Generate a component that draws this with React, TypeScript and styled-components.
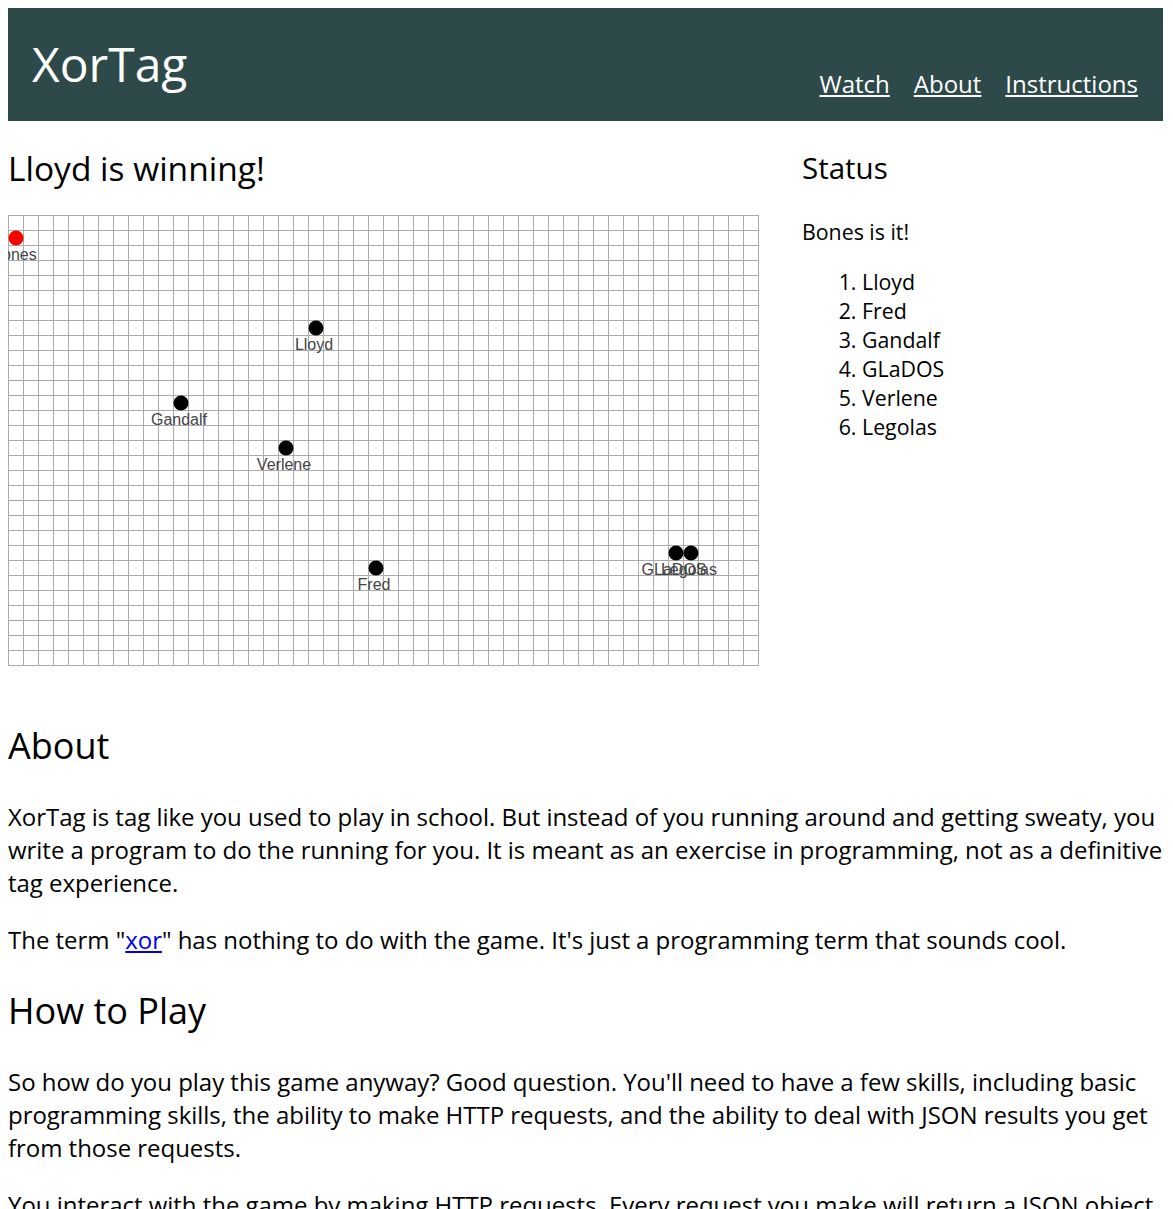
import styled, { createGlobalStyle } from 'styled-components';

const GlobalStyle = createGlobalStyle`
  body {
    margin: 8px 10px 8px 8px;
    font-family: "Open Sans", "Noto Sans", sans-serif;
    color: #000;
    background: #fff;
  }
`;

const Header = styled.header`
  display: flex;
  justify-content: space-between;
  align-items: flex-end;
  padding: 23px 25px 21px 24px;
  background: #2e4949;
  color: #fff;
`;

const Brand = styled.h1`
  margin: 0 0 4px;
  font-size: 48px;
  font-weight: 400;
  line-height: 65px;
`;

const Nav = styled.nav`
  display: flex;
  gap: 24px;
  font-size: 24px;
  line-height: 33px;
`;

const NavLink = styled.a`
  color: #fff;
  text-decoration: underline;
`;

const TopRow = styled.div`
  display: grid;
  grid-template-columns: 770px 1fr;
  column-gap: 24px;
  padding-bottom: 25px;
`;

const Winner = styled.h1`
  margin: 25px 0 25px;
  font-size: 33.5px;
  font-weight: 400;
  line-height: 44px;
`;

const StatusTitle = styled.h2`
  margin: 26px 0 29px;
  font-size: 29.5px;
  font-weight: 400;
  line-height: 41px;
`;

const StatusText = styled.p`
  margin: 0 0 21px;
  font-size: 21.33px;
  line-height: 29px;
`;

const Ranking = styled.ol`
  margin: 0;
  padding-left: 60px;
  font-size: 21.33px;
  line-height: 29px;
`;

const Section = styled.section`
  font-size: 24px;
  line-height: 33px;
  letter-spacing: -0.03px;
`;

const SectionTitle = styled.h2`
  margin: 30px 0;
  font-size: 36px;
  font-weight: 400;
  line-height: 49px;
  letter-spacing: 0;
`;

const Para = styled.p`
  margin: 24px 0;
`;

const TextLink = styled.a`
  color: #0000ee;
  text-decoration: underline;
`;

const BoardSvg = styled.svg`
  display: block;
  overflow: hidden;
`;

const CELL = 15;
const COLS = 50;
const ROWS = 30;

interface Player {
  name: string;
  col: number;
  row: number;
  it?: boolean;
}

const players: Player[] = [
  { name: 'Bones', col: 0, row: 1, it: true },
  { name: 'Lloyd', col: 20, row: 7 },
  { name: 'Gandalf', col: 11, row: 12 },
  { name: 'Verlene', col: 18, row: 15 },
  { name: 'Fred', col: 24, row: 23 },
  { name: 'GLaDOS', col: 44, row: 22 },
  { name: 'Legolas', col: 45, row: 22 },
];

function Board() {
  const w = COLS * CELL;
  const h = ROWS * CELL;
  const lines = [];
  for (let c = 0; c <= COLS; c++) {
    lines.push(<line key={'v' + c} x1={c * CELL + 0.5} y1={0} x2={c * CELL + 0.5} y2={h + 1} />);
  }
  for (let r = 0; r <= ROWS; r++) {
    lines.push(<line key={'h' + r} x1={0} y1={r * CELL + 0.5} x2={w + 1} y2={r * CELL + 0.5} />);
  }
  return (
    <BoardSvg width={w + 1} height={h + 1} viewBox={`0 0 ${w + 1} ${h + 1}`}>
      <g stroke="#aaaaaa" strokeWidth={1}>{lines}</g>
      {players.map((p) => {
        const cx = p.col * CELL + 8;
        const cy = p.row * CELL + 8;
        return (
          <g key={p.name}>
            <circle cx={cx} cy={cy} r={7.5} fill={p.it ? '#ff0000' : '#000'} />
            <text
              x={cx - 2}
              y={cy + 22}
              textAnchor="middle"
              fontFamily='"Liberation Sans", Arial, sans-serif'
              fontSize={16}
              fill="#444"
            >
              {p.name}
            </text>
          </g>
        );
      })}
    </BoardSvg>
  );
}

export default function App() {
  return (
    <>
      <GlobalStyle />
      <Header>
        <Brand>XorTag</Brand>
        <Nav>
          <NavLink href="#watch">Watch</NavLink>
          <NavLink href="#about">About</NavLink>
          <NavLink href="#instructions">Instructions</NavLink>
        </Nav>
      </Header>
      <TopRow id="watch">
        <div>
          <Winner>Lloyd is winning!</Winner>
          <Board />
        </div>
        <div>
          <StatusTitle>Status</StatusTitle>
          <StatusText>Bones is it!</StatusText>
          <Ranking>
            <li>Lloyd</li>
            <li>Fred</li>
            <li>Gandalf</li>
            <li>GLaDOS</li>
            <li>Verlene</li>
            <li>Legolas</li>
          </Ranking>
        </div>
      </TopRow>
      <Section id="about">
        <SectionTitle>About</SectionTitle>
        <Para>
          XorTag is tag like you used to play in school. But instead of you running around and getting sweaty, you
          write a program to do the running for you. It is meant as an exercise in programming, not as a definitive
          tag experience.
        </Para>
        <Para>
          The term "<TextLink href="#xor">xor</TextLink>" has nothing to do with the game. It's just a programming term
          that sounds cool.
        </Para>
      </Section>
      <Section id="instructions">
        <SectionTitle>How to Play</SectionTitle>
        <Para>
          So how do you play this game anyway? Good question. You'll need to have a few skills, including basic
          programming skills, the ability to make HTTP requests, and the ability to deal with JSON results you get
          from those requests.
        </Para>
        <Para>
          You interact with the game by making HTTP requests. Every request you make will return a JSON object
          describing the current state of the game from your point of view.
        </Para>
      </Section>
    </>
  );
}
